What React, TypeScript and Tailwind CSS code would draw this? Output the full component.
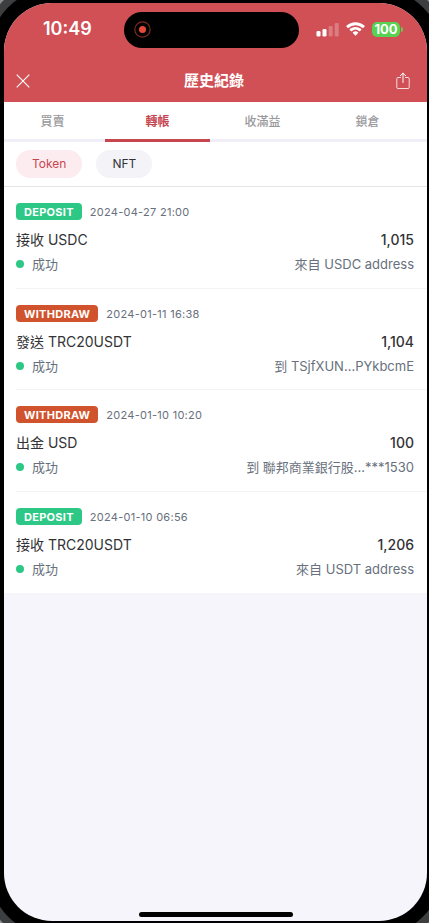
import React from "react";

type Kind = "DEPOSIT" | "WITHDRAW";

interface Entry {
  kind: Kind;
  time: string;
  title: string;
  amount: string;
  status: string;
  party: string;
}

const entries: Entry[] = [
  { kind: "DEPOSIT", time: "2024-04-27 21:00", title: "接收 USDC", amount: "1,015", status: "成功", party: "來自 USDC address" },
  { kind: "WITHDRAW", time: "2024-01-11 16:38", title: "發送 TRC20USDT", amount: "1,104", status: "成功", party: "到 TSjfXUN...PYkbcmE" },
  { kind: "WITHDRAW", time: "2024-01-10 10:20", title: "出金 USD", amount: "100", status: "成功", party: "到 聯邦商業銀行股...***1530" },
  { kind: "DEPOSIT", time: "2024-01-10 06:56", title: "接收 TRC20USDT", amount: "1,206", status: "成功", party: "來自 USDT address" },
];

const tabs = ["買賣", "轉帳", "收滿益", "鎖倉"];

function StatusBar() {
  return (
    <div className="grid h-[56px] grid-cols-[112px_1fr_120px] items-center pb-[4px]">
      <div className="pl-[39px] text-[18px] leading-6 font-semibold">10:49</div>
      <div className="mx-auto mt-[1px] flex h-[36px] w-[175px] items-center rounded-full bg-black pl-[10px]">
        <svg width="17" height="17" viewBox="0 0 17 17" fill="none" aria-hidden="true">
          <circle cx="8.500" cy="8.500" r="7.700" stroke="#7c2b22" strokeWidth="1.200" />
          <circle cx="8.500" cy="8.500" r="3.500" fill="#e8483a" />
        </svg>
      </div>
      <div className="flex items-center gap-[7px] pl-[9px]">
        <svg width="23" height="15" viewBox="0 0 23 15" fill="#fff" aria-hidden="true">
          <rect x="0.500" y="9" width="4" height="5.500" rx="1.300" />
          <rect x="6.500" y="7" width="4" height="7.500" rx="1.300" />
          <rect x="12.700" y="4" width="4" height="10.500" rx="1.300" opacity="0.250" />
          <rect x="18.700" y="1" width="4" height="13.500" rx="1.300" opacity="0.250" />
        </svg>
        <svg width="19" height="14" viewBox="0 0 19 14" fill="#fff" aria-hidden="true">
          <path d="M9.500 0.300C13 0.300 16.200 1.600 18.600 3.800c.2.200.2.500 0 .7L17.300 5.900c-.2.200-.5.200-.7 0A10.500 10.500 0 0 0 2.400 5.900c-.2.200-.5.200-.7 0L.4 4.500c-.2-.2-.2-.5 0-.7A13.400 13.400 0 0 1 9.500.3Z" />
          <path d="M9.500 4.900c2.200 0 4.200.8 5.800 2.200.2.200.2.500 0 .7L14 9.200c-.2.200-.5.200-.7 0a5.800 5.800 0 0 0-7.600 0c-.2.200-.5.200-.7 0L3.700 7.800c-.2-.2-.2-.5 0-.7a8.800 8.800 0 0 1 5.800-2.200Z" />
          <path d="M9.500 9.300c1 0 1.900.4 2.600 1 .2.200.2.500 0 .7l-2.200 2.400c-.2.200-.5.200-.7 0L6.900 11c-.2-.2-.2-.5 0-.7.700-.6 1.600-1 2.600-1Z" />
        </svg>
        <div className="flex items-center gap-px">
          <span className="flex h-[15px] w-[28px] items-center justify-center rounded-[5px] bg-[#57d252] text-[13px] leading-4 font-bold">100</span>
          <span className="h-[5px] w-[2px] rounded-r-full bg-[#57d252]" />
        </div>
      </div>
    </div>
  );
}

function TitleBar() {
  return (
    <div className="grid h-[43px] grid-cols-[37px_1fr_40px] items-center">
      <button type="button" aria-label="關閉" className="flex justify-center">
        <svg width="14" height="14" viewBox="0 0 14 14" stroke="#fff" strokeWidth="1.100" aria-hidden="true">
          <path d="M0.700 0.700 13.300 13.300M13.300 0.700.7 13.300" />
        </svg>
      </button>
      <h1 className="text-center text-[15px] leading-5 font-bold">歷史紀錄</h1>
      <button type="button" aria-label="分享" className="flex justify-start pl-[9px]">
        <svg width="14" height="18" viewBox="0 0 14 18" fill="none" stroke="#fff" strokeLinejoin="round" strokeLinecap="round" aria-hidden="true">
          <path d="M4.500 5.500H2A1.200 1.200 0 0 0 .8 6.700v8.600A1.200 1.200 0 0 0 2 16.500h10a1.200 1.200 0 0 0 1.200-1.200V6.700A1.200 1.200 0 0 0 12 5.500H9.500" strokeOpacity="0.800" />
          <path d="M7 10.500V1.200M4.300 3.800 7 1.100l2.700 2.700" />
        </svg>
      </button>
    </div>
  );
}

function Row({ entry }: { entry: Entry }) {
  const deposit = entry.kind === "DEPOSIT";
  return (
    <li className="ml-3 border-b border-[#f4f4f6] pt-4 pr-[13px] pb-[14px] last:border-white even:pb-[13px]">
      <div className="flex items-center gap-2">
        <span
          className={
            deposit
              ? "flex h-[17px] items-center rounded-[4px] bg-[#2dc886] px-2 text-[11px] leading-4 font-bold tracking-wide text-white"
              : "flex h-[17px] items-center rounded-[4px] bg-[#d1532d] px-2 text-[11px] leading-4 font-bold tracking-wide text-white"
          }
        >
          {entry.kind}
        </span>
        <time className="text-[11px] leading-4 tracking-wide text-[#67707c]">{entry.time}</time>
      </div>
      <div className="mt-2 flex justify-between text-[14px] leading-6 text-[#333336]">
        <span>{entry.title}</span>
        <span className="font-medium">{entry.amount}</span>
      </div>
      <div className="mt-[2px] flex items-center justify-between text-[13px] leading-5 text-[#67707c]">
        <span className="flex items-center gap-2">
          <span className="size-2 rounded-full bg-[#2dc886]" />
          {entry.status}
        </span>
        <span>{entry.party}</span>
      </div>
    </li>
  );
}

export default function App() {
  return (
    <div className="flex h-screen overflow-hidden bg-[#8b8d8e] pt-[3px] pr-[2px] pb-[2px] pl-[4px] font-[Inter,'Noto_Sans_CJK_TC',sans-serif]">
      <main className="flex flex-1 flex-col overflow-hidden rounded-[48px] bg-[#f6f5fc] shadow-[0_0_0_14px_#000,0_0_0_22px_#3c3e40]">
        <header className="bg-[#d05056] text-white">
          <StatusBar />
          <TitleBar />
        </header>
        <nav className="-ml-1 grid h-[40px] shrink-0 grid-cols-4 border-b-3 border-[#f0eff8] bg-white pr-[7px]">
          {tabs.map((tab, i) => (
            <button
              key={tab}
              type="button"
              className={
                i === 1
                  ? "-mb-[3px] border-b-3 border-[#c64650] pt-[2px] text-[12px] leading-4 font-bold text-[#c64650]"
                  : "pt-[2px] text-[12px] leading-4 font-medium text-[#99999c]"
              }
            >
              {tab}
            </button>
          ))}
        </nav>
        <div className="flex shrink-0 gap-[14px] border-b border-[#e4e4e8] bg-white px-3 py-2 text-[12px] leading-5">
          <button type="button" className="h-7 rounded-full bg-[#fdecef] px-4 text-[#c64650]">Token</button>
          <button type="button" className="h-7 rounded-full bg-[#f4f3f7] px-4 text-[#333336]">NFT</button>
        </div>
        <ul className="shrink-0 bg-white">
          {entries.map((entry) => (
            <Row key={entry.time} entry={entry} />
          ))}
        </ul>
        <div className="mx-auto mt-auto mb-[4px] h-[5px] w-[154px] rounded-full bg-black" />
      </main>
    </div>
  );
}
